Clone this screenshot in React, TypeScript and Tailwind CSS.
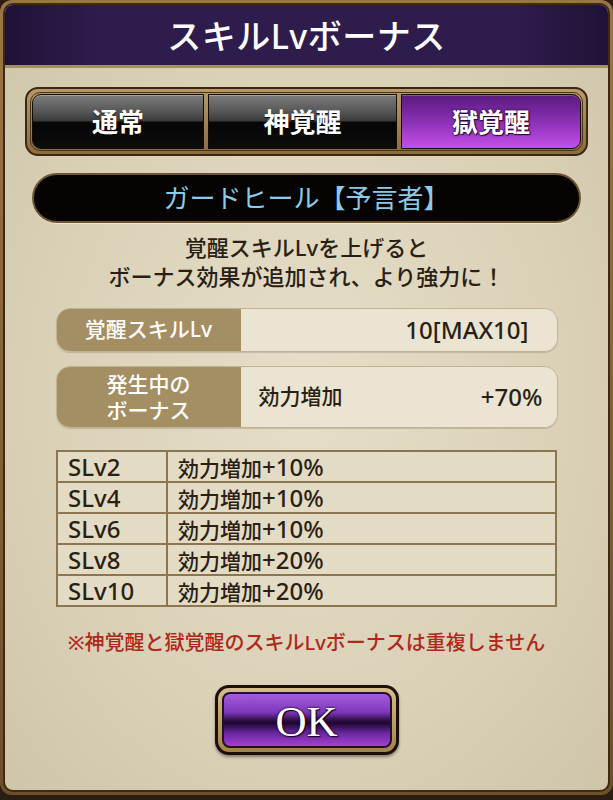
import React from 'react';

const JP = { fontFamily: '"Noto Sans", "Noto Sans CJK JP", sans-serif' };

const tabs = [
  { label: '通常', active: false, w: 'w-[172px]', round: 'rounded-l-[9px]' },
  { label: '神覚醒', active: false, w: 'w-[189px]', round: '' },
  { label: '獄覚醒', active: true, w: 'flex-1', round: 'rounded-r-[9px]' },
];

const bonusRows = [
  { lv: 'SLv2', value: '+10%' },
  { lv: 'SLv4', value: '+10%' },
  { lv: 'SLv6', value: '+10%' },
  { lv: 'SLv8', value: '+20%' },
  { lv: 'SLv10', value: '+20%' },
];

const Tab = ({ label, active, w, round }: { label: string; active: boolean; w: string; round: string }) => (
  <div
    className={`${w} ${round} flex items-center justify-center border border-[#140d05] ${
      active
        ? 'bg-[linear-gradient(180deg,#5a1a7c_0%,#7a2aa4_35%,#a23cca_70%,#c650e8_100%)] shadow-[inset_0_1px_0_rgba(255,255,255,0.25)]'
        : 'bg-[linear-gradient(180deg,#7c7c7c_0%,#585858_30%,#3c3c3c_48%,#060606_52%,#0c0c0c_100%)] shadow-[inset_0_1px_0_rgba(255,255,255,0.3)]'
    }`}
  >
    <span
      className="text-[26px] font-bold text-white leading-none"
      style={{ textShadow: active ? '0 0 2px #2a0a3a, 0 0 2px #2a0a3a, 1px 1px 1px #2a0a3a' : '0 1px 1px #000' }}
    >
      {label}
    </span>
  </div>
);

export default function App() {
  return (
    <div className="w-[613px] h-[800px] bg-[#2a1e12] overflow-hidden" style={JP}>
      <div className="h-[795px] rounded-[12px] bg-[linear-gradient(180deg,#9a7646,#6e5028)] p-[3px]">
        <div className="h-full rounded-[10px] border-2 border-[#3e2a14] overflow-hidden flex flex-col bg-[radial-gradient(ellipse_at_center,#e6dec8_0%,#dad1b7_60%,#cfc5a9_100%)]">
          {/* header */}
          <div className="h-[63px] shrink-0 flex items-center justify-center bg-[linear-gradient(90deg,#1f1236_0%,#2e1c4c_15%,#2e1c4c_85%,#1f1236_100%)] border-b-[3px] border-[#a48e62]">
            <h1 className="text-[34px] font-medium text-white tracking-[0.5px] leading-none mt-[2px]">
              スキルLvボーナス
            </h1>
          </div>

          <div className="flex flex-col items-center px-[16px]">
            {/* tabs */}
            <div className="mt-[19px] w-[563px] h-[69px] rounded-[13px] bg-[linear-gradient(180deg,#b8996a,#8c6c3e)] border-2 border-[#3a2812] p-[3px]">
              <div className="h-full flex gap-[4px] rounded-[10px] border border-[#4a3418] p-[1px]">
                {tabs.map((t) => (
                  <Tab key={t.label} {...t} />
                ))}
              </div>
            </div>

            {/* skill name */}
            <div className="mt-[17px] w-[549px] h-[50px] rounded-full bg-[#050403] border-2 border-[#6e5432] shadow-[0_1px_0_rgba(255,255,255,0.5)] flex items-center justify-center">
              <span className="text-[26px] font-normal text-[#8ccbe8] leading-none">ガードヒール【予言者】</span>
            </div>

            {/* description */}
            <div className="mt-[10px] text-center text-[22px] font-medium text-[#2a1f14] leading-[29px]">
              <p>覚醒スキルLvを上げると</p>
              <p>ボーナス効果が追加され、より強力に！</p>
            </div>

            {/* awakening level */}
            <div className="mt-[17px] w-[502px] h-[44px] rounded-[14px] overflow-hidden flex border border-[#c2b38f] shadow-[0_1px_1px_rgba(0,0,0,0.15)]">
              <div className="w-[184px] bg-[#a48e64] flex items-center justify-center text-[21px] font-medium text-white">
                覚醒スキルLv
              </div>
              <div className="flex-1 bg-[#ebe4d2] flex items-center justify-end pr-[28px] text-[24px] font-medium text-[#2a1f14]">
                10[MAX10]
              </div>
            </div>

            {/* active bonus */}
            <div className="mt-[14px] w-[502px] h-[62px] rounded-[14px] overflow-hidden flex border border-[#c2b38f] shadow-[0_1px_1px_rgba(0,0,0,0.15)]">
              <div className="w-[184px] bg-[#a48e64] flex flex-col items-center justify-center text-[21px] font-medium text-white">
                <div className="leading-[26px]">発生中の</div>
                <div className="leading-[26px]">ボーナス</div>
              </div>
              <div className="flex-1 bg-[#ebe4d2] flex items-center justify-between pl-[18px] pr-[14px] font-medium text-[#2a1f14]">
                <span className="text-[21px]">効力増加</span>
                <span className="text-[24px]">+70%</span>
              </div>
            </div>

            {/* table */}
            <table className="mt-[22px] w-[501px] border-collapse border-2 border-[#8b7650]">
              <tbody>
                {bonusRows.map((r) => (
                  <tr key={r.lv} className="h-[31px] bg-[#e3dbc4]">
                    <td className="w-[110px] border-2 border-[#8b7650] pl-[10px] text-[24px] font-medium text-[#2a1f14] leading-none">
                      {r.lv}
                    </td>
                    <td className="border-2 border-[#8b7650] pl-[10px] font-medium text-[#2a1f14] leading-none">
                      <span className="text-[21px]">効力増加</span>
                      <span className="text-[24px]">{r.value}</span>
                    </td>
                  </tr>
                ))}
              </tbody>
            </table>

            {/* note */}
            <p className="mt-[24px] text-[20px] font-medium text-[#b0281a] leading-[24px] whitespace-nowrap">
              ※神覚醒と獄覚醒のスキルLvボーナスは重複しません
            </p>

            {/* OK */}
            <button className="mt-[30px] w-[184px] h-[70px] rounded-[14px] bg-[#1a1008] p-[3px] shadow-[0_2px_3px_rgba(0,0,0,0.4)]">
              <div className="h-full rounded-[11px] bg-[linear-gradient(180deg,#d8bc86,#a4824e)] p-[4px]">
                <div className="h-full rounded-[8px] border-2 border-[#20102c] bg-[linear-gradient(180deg,#a45cdc_0%,#7e38bc_35%,#301048_50%,#1c0830_56%,#6a26a0_75%,#a440d0_100%)] flex items-center justify-center">
                  <span
                    className="text-[43px] text-white leading-none mt-[2px]"
                    style={{ fontFamily: '"Liberation Serif", "DejaVu Serif", serif', textShadow: '0 0 2px #1a0620, 0 0 2px #1a0620, 1px 1px 1px #1a0620' }}
                  >
                    OK
                  </span>
                </div>
              </div>
            </button>
          </div>
        </div>
      </div>
    </div>
  );
}
